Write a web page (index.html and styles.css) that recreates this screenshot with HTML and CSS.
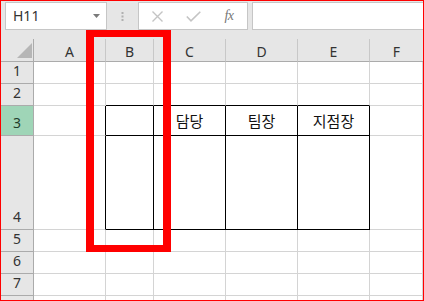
FILE: index.html
```html
<!DOCTYPE html>
<html lang="ko">
<head>
<meta charset="utf-8">
<title>Sheet</title>
<link rel="stylesheet" href="styles.css">
</head>
<body>
<div class="frame">
  <div class="toolbar">
    <div class="namebox">
      <span class="ref">H11</span>
      <svg class="caret" width="7" height="4" viewBox="0 0 7 4"><path d="M0 0H7L3.5 4Z" fill="#7a7a7a"/></svg>
    </div>
    <div class="grip">
      <svg width="3" height="9" viewBox="0 0 3 9"><rect x="0.5" y="0" width="2" height="2" fill="#b0b0b0"/><rect x="0.5" y="3.5" width="2" height="2" fill="#b0b0b0"/><rect x="0.5" y="7" width="2" height="2" fill="#b0b0b0"/></svg>
    </div>
    <div class="fxbox">
      <span class="fxbtn"><svg width="11" height="11" viewBox="0 0 11 11"><path d="M0.5 0.5L10.5 10.5M10.5 0.5L0.5 10.5" stroke="#c4c4c4" stroke-width="1.4" fill="none"/></svg></span>
      <span class="fxbtn"><svg width="15" height="11" viewBox="0 0 15 11"><path d="M0.8 5.5L5 9.8L14.3 0.8" stroke="#c4c4c4" stroke-width="1.6" fill="none"/></svg></span>
      <span class="fxbtn fx">fx</span>
    </div>
    <div class="input"></div>
  </div>
  <div class="sheet">
    <div class="corner"><svg width="15" height="15" viewBox="0 0 15 15"><path d="M15 0V15H0Z" fill="#b6b6b6"/></svg></div>
    <div class="ch">A</div><div class="ch">B</div><div class="ch">C</div><div class="ch">D</div><div class="ch">E</div><div class="ch last">F</div>

    <div class="rh">1</div><div class="c"></div><div class="c"></div><div class="c"></div><div class="c"></div><div class="c"></div><div class="c"></div>
    <div class="rh">2</div><div class="c"></div><div class="c bb"></div><div class="c bb"></div><div class="c bb"></div><div class="c bb"></div><div class="c"></div>
    <div class="rh sel">3</div><div class="c br"></div><div class="c br bb"></div><div class="c br bb txt">담당</div><div class="c br bb txt">팀장</div><div class="c br bb txt">지점장</div><div class="c"></div>
    <div class="rh">4</div><div class="c br"></div><div class="c br bb"></div><div class="c br bb"></div><div class="c br bb"></div><div class="c br bb"></div><div class="c"></div>
    <div class="rh">5</div><div class="c"></div><div class="c"></div><div class="c"></div><div class="c"></div><div class="c"></div><div class="c"></div>
    <div class="rh">6</div><div class="c"></div><div class="c"></div><div class="c"></div><div class="c"></div><div class="c"></div><div class="c"></div>
    <div class="rh">7</div><div class="c"></div><div class="c"></div><div class="c"></div><div class="c"></div><div class="c"></div><div class="c"></div>
    <div class="rh"></div><div class="c"></div><div class="c"></div><div class="c"></div><div class="c"></div><div class="c"></div><div class="c"></div>
  </div>
  <div class="highlight"></div>
</div>
</body>
</html>
```
FILE: styles.css
```css
* { box-sizing: border-box; }
html, body { margin: 0; padding: 0; background: #fff; }
.frame {
  position: relative;
  width: 424px;
  height: 301px;
  border: 1px solid #ff0000;
  overflow: hidden;
  font-family: "Noto Sans", "Liberation Sans", sans-serif;
  color: #333;
}
.toolbar {
  height: 38px;
  background: #e6e6e6;
  display: flex;
  align-items: flex-start;
  padding: 1px 0 0 4px;
}
.namebox {
  width: 102px;
  height: 28px;
  background: #fff;
  border: 1px solid #c6c6c6;
  display: flex;
  align-items: center;
  justify-content: space-between;
  padding: 0 6px 0 7px;
}
.ref { font-size: 14px; line-height: 1; color: #333; }
.caret { margin-top: -1px; }
.grip {
  width: 31px;
  height: 28px;
  display: flex;
  align-items: center;
  justify-content: center;
}
.fxbox {
  width: 110px;
  height: 28px;
  background: #fff;
  border: 1px solid #c6c6c6;
  display: flex;
  align-items: center;
}
.fxbtn {
  width: 36px;
  display: flex;
  justify-content: center;
  align-items: center;
}
.fx {
  font-family: "Liberation Serif", serif;
  font-style: italic;
  font-size: 14px;
  color: #777;
  letter-spacing: -0.5px;
}
.input {
  flex: 1;
  height: 28px;
  margin-left: 4px;
  margin-right: -2px;
  background: #fff;
  border: 1px solid #c6c6c6;
}
.sheet {
  display: grid;
  grid-template-columns: 33px 72px 48px 72px 72px 72px 1fr;
  grid-template-rows: 23px 22px 22px 30px 94px 22px 22px 22px 22px;
}
.corner, .ch, .rh {
  background: #e6e6e6;
  border-right: 1px solid #ababab;
  border-bottom: 1px solid #ababab;
}
.corner {
  display: flex;
  align-items: flex-end;
  justify-content: flex-end;
  padding: 0 1px 3px 0;
}
.ch {
  border-right-color: #c8c8c8;
  display: flex;
  align-items: center;
  justify-content: center;
  font-size: 14px;
  padding-top: 2px;
}
.ch.last { border-right: 0; }
.rh {
  display: flex;
  align-items: flex-end;
  justify-content: center;
  font-size: 14px;
  line-height: 1;
  padding-bottom: 5px;
}
.rh.sel { background: #9fd5b7; color: #1f3d2c; }
.c {
  border-right: 1px solid #d4d4d4;
  border-bottom: 1px solid #d4d4d4;
}
.c.br { border-right-color: #000; }
.c.bb { border-bottom-color: #000; }
.txt {
  display: flex;
  align-items: center;
  justify-content: center;
  font-family: "Noto Sans CJK KR", "Noto Sans", sans-serif;
  font-size: 15px;
  color: #111;
}
.highlight {
  position: absolute;
  left: 85px;
  top: 29px;
  width: 85px;
  height: 222px;
  border-style: solid;
  border-color: #ff0000;
  border-width: 7px 8px 7px 8px;
}
```
